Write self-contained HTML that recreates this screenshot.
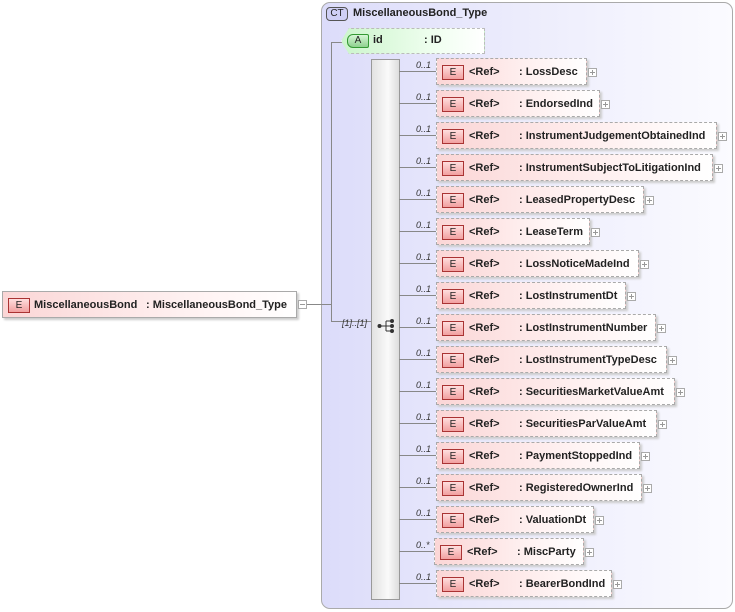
<!DOCTYPE html>
<html><head><meta charset="utf-8"><style>
body{margin:0;width:735px;height:612px;background:#fff;position:relative;overflow:hidden;font-family:"Liberation Sans",Arial,sans-serif;font-size:11px;font-weight:bold;color:#222}
.a{position:absolute}
.ct{left:321px;top:2px;width:410px;height:605px;border:1px solid #aaa;border-radius:9px;background:linear-gradient(90deg,#dcdcfa 0%,#ebebfc 45%,#fbfbff 100%)}
.el{position:absolute;height:25px;border:1px dashed #aaa;background:linear-gradient(90deg,#fbd6d6,#fff4f4 70%,#fff);box-shadow:2px 2px 2px #ccc}
.badge{position:absolute;left:5px;top:6px;width:20px;height:13px;border:1px solid #a33;background:linear-gradient(#ffdede,#f2a0a0);font-size:10px;font-weight:normal;text-align:center;line-height:13px;color:#222}
.el span{position:absolute;top:7px}
.plus{position:absolute;width:7px;height:7px;border:1px solid #aaa;background:#fff}
.plus:before{content:"";position:absolute;left:1px;top:3px;width:5px;height:1px;background:#999}
.plus:after{content:"";position:absolute;left:3px;top:1px;width:1px;height:5px;background:#999}
.ln{position:absolute;background:#888}
.m{position:absolute;font-size:9px;font-style:italic;font-weight:normal;color:#333}
</style></head><body>
<div class="a ct"></div>
<div class="a" style="left:326px;top:7px;width:20px;height:12px;border:1px solid #555;border-radius:4px;background:#cfcff5;font-weight:normal;font-size:10px;text-align:center;line-height:12px">CT</div>
<div class="a" style="left:353px;top:7px">MiscellaneousBond_Type</div>

<div class="el" style="left:2px;top:291px;width:293px;border:1px solid #aaa"><div class="badge">E</div><span style="left:31px">MiscellaneousBond</span><span style="left:143px">: MiscellaneousBond_Type</span></div>
<div class="a" style="left:298px;top:300px;width:7px;height:7px;border:1px solid #aaa;background:#fff"><div style="position:absolute;left:1px;top:3px;width:5px;height:1px;background:#999"></div></div>
<div class="ln" style="left:307px;top:304px;width:24px;height:1px"></div>
<div class="ln" style="left:331px;top:42px;width:1px;height:280px"></div>
<div class="ln" style="left:331px;top:42px;width:12px;height:1px"></div>
<div class="ln" style="left:331px;top:321px;width:40px;height:1px"></div>
<div class="m" style="left:342px;top:318px">[1]..[1]</div>

<div class="a" style="left:341px;top:28px;width:142px;height:24px;border:1px dashed #bbb;background:linear-gradient(90deg,#ccf5cc,#f2fff2 70%,#fff);clip-path:polygon(8px 0,100% 0,100% 100%,8px 100%,0 50%);"></div>
<div class="a" style="left:347px;top:34px;width:20px;height:12px;border:1px solid #393;border-radius:6px 2px 2px 6px;background:linear-gradient(#d6f7d6,#8fd08f);font-weight:normal;font-size:10px;text-align:center;line-height:12px">A</div>
<div class="a" style="left:373px;top:34px">id</div>
<div class="a" style="left:424px;top:34px">: ID</div>

<div class="a" style="left:371px;top:59px;width:27px;height:539px;border:1px solid #999;background:linear-gradient(90deg,#e2e2e2,#fafafa 60%,#ddd)"></div>
<svg class="a" style="left:377px;top:318px" width="20" height="16"><line x1="2" y1="8" x2="9" y2="8" stroke="#333"/><line x1="9" y1="3" x2="9" y2="13" stroke="#333"/><line x1="9" y1="3" x2="15" y2="3" stroke="#333"/><line x1="9" y1="8" x2="15" y2="8" stroke="#333"/><line x1="9" y1="13" x2="15" y2="13" stroke="#333"/><circle cx="2.5" cy="8" r="2" fill="#333"/><circle cx="15" cy="3" r="2" fill="#333"/><circle cx="15" cy="8" r="2" fill="#333"/><circle cx="15" cy="13" r="2" fill="#333"/></svg>

<div id="rows"></div>
<script>
var r=[["LossDesc",585],["EndorsedInd",598],["InstrumentJudgementObtainedInd",715],["InstrumentSubjectToLitigationInd",711],["LeasedPropertyDesc",642],["LeaseTerm",588],["LossNoticeMadeInd",637],["LostInstrumentDt",624],["LostInstrumentNumber",654],["LostInstrumentTypeDesc",665],["SecuritiesMarketValueAmt",673],["SecuritiesParValueAmt",655],["PaymentStoppedInd",638],["RegisteredOwnerInd",640],["ValuationDt",592],["MiscParty",582],["BearerBondInd",610]];
var h="";
r.forEach(function(e,i){var c=71+32*i,L=e[0]=="MiscParty"?434:436,w=e[1]-L;
h+='<div class="ln" style="left:399px;top:'+c+'px;width:'+(L-399)+'px;height:1px"></div>';
h+='<div class="m" style="left:416px;top:'+(c-11)+'px">'+(e[0]=="MiscParty"?"0..*":"0..1")+'</div>';
h+='<div class="el" style="left:'+L+'px;top:'+(c-13)+'px;width:'+w+'px"><div class="badge">E</div><span style="left:32px">&lt;Ref&gt;</span><span style="left:82px">: '+e[0]+'</span></div>';
h+='<div class="plus" style="left:'+(e[1]+3)+'px;top:'+(c-3)+'px"></div>';});
document.getElementById("rows").innerHTML=h;
</script>
</body></html>
